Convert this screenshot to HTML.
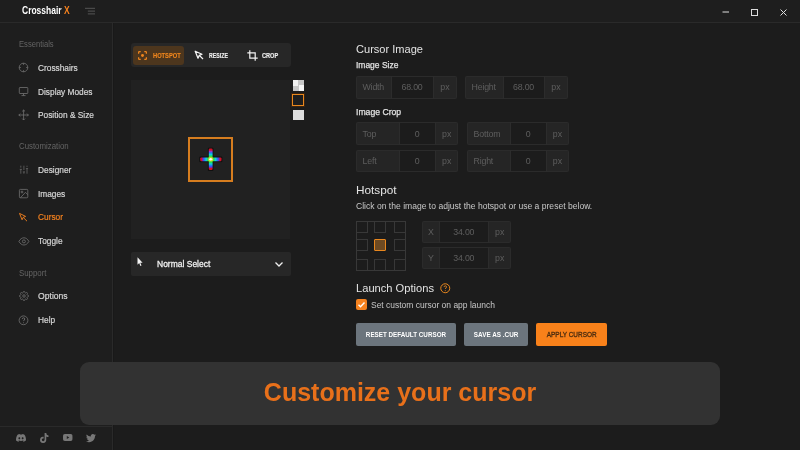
<!DOCTYPE html>
<html><head><meta charset="utf-8">
<style>
*{box-sizing:border-box;margin:0;padding:0}
html,body{width:800px;height:450px;overflow:hidden;background:#1c1c1c;font-family:"Liberation Sans",sans-serif;color:#ddd}
.abs{position:absolute}
svg{position:absolute;overflow:visible}
#titlebar{position:absolute;left:0;top:0;width:800px;height:22.6px;background:#1e1e1e;border-bottom:1px solid #2a2a2a}
#title{position:absolute;left:21.5px;top:5.4px;font-size:10.2px;transform-origin:0 50%;transform:scaleX(.833);font-weight:bold;color:#fff;white-space:nowrap}
#title span{color:#f5821f}
#sidebar{position:absolute;left:0;top:23px;width:113px;height:427px;background:#1e1e1e;border-right:1px solid #2a2a2a;box-shadow:1px 0 0 #191919}
.sec{position:absolute;left:18.7px;font-size:8.6px;transform-origin:0 50%;transform:scaleX(.885);color:#646464;white-space:nowrap}
.item{-webkit-text-stroke:.2px;position:absolute;left:37.8px;font-size:9.2px;transform-origin:0 50%;transform:scaleX(.905);color:#d6d6d6;white-space:nowrap}
.item.act{color:#f5821f}
#social{position:absolute;left:0;top:426px;width:112px;height:24px;border-top:1px solid #2a2a2a}
#toolbar{position:absolute;left:131px;top:43.3px;width:160px;height:24px;background:#272727;border-radius:3px}
#hot{position:absolute;left:2.2px;top:3px;width:50.8px;height:18.5px;background:#4d361d;border-radius:3px}
.tb{-webkit-text-stroke:.15px;position:absolute;top:8.9px;transform-origin:0 50%;font-size:6.8px;font-weight:bold;color:#ececec;white-space:nowrap}
#preview{position:absolute;left:131px;top:80px;width:159px;height:159px;background:#212121}
#sel{position:absolute;left:188px;top:137px;width:45px;height:45px;border:2px solid #d67d1f}
#dd{position:absolute;left:131px;top:252px;width:160px;height:24px;background:#272727;border-radius:2px}
.h1{position:absolute;left:356px;font-size:11.4px;transform-origin:0 50%;color:#e4e4e4;white-space:nowrap}
.h2{-webkit-text-stroke:.25px;position:absolute;left:355.8px;font-size:9.2px;transform-origin:0 50%;transform:scaleX(.93);color:#e2e2e2;white-space:nowrap}
.inp{position:absolute;height:22.5px;background:#252525;box-shadow:inset 0 0 0 1px #2b2b2b;border-radius:2px;overflow:hidden;font-size:8.8px;color:#5e5e5e}
.inp div{position:absolute;top:0;height:100%;line-height:22.5px;white-space:nowrap}
.inp .v{background:#1c1c1c;box-shadow:inset 0 1px 0 #2b2b2b,inset 0 -1px 0 #2b2b2b;text-align:center;border-left:1px solid #2c2c2c;border-right:1px solid #2c2c2c}
.inp .u{text-align:center}
.inp .l,.inp .v{letter-spacing:-.18px}
.btn span{display:inline-block}
.btn{position:absolute;top:323px;height:23px;border-radius:2px;font-size:6.9px;font-weight:bold;color:#fff;text-align:center;line-height:23px;white-space:nowrap}
#banner{position:absolute;left:80px;top:362px;width:640px;height:63px;background:#323232;border-radius:9px;text-align:center;line-height:60.6px;font-size:25px;font-weight:bold;color:#e8701a;white-space:nowrap}
.hs{position:absolute;width:12px;height:12px;border:1px solid #383838}
</style></head><body><div id="root" style="position:absolute;left:0;top:0;width:800px;height:450px;will-change:transform">
<div id="titlebar"><div id="title">Crosshair <span>X</span></div>
<svg style="left:85px;top:7px" width="11" height="8" viewBox="0 0 11 8"><path d="M0 1.3h10M2.8 4.1h7.2M2.8 6.9h7.2" stroke="#5c5c5c" stroke-width=".9" fill="none"/></svg>
<svg style="left:720px;top:5.5px" width="70" height="12" viewBox="0 0 70 12"><path d="M2.5 6h6.5" stroke="#ddd" stroke-width="1" fill="none"/><rect x="31.5" y="3.5" width="6" height="6" fill="none" stroke="#ddd" stroke-width="1"/><path d="M60.5 3.5l6 6M66.5 3.5l-6 6" stroke="#ddd" stroke-width="1" fill="none"/></svg>
</div>
<div id="sidebar"></div>
<div class="sec" style="top:39px">Essentials</div>
<div class="item" style="top:62.7px">Crosshairs</div>
<div class="item" style="top:86.7px">Display Modes</div>
<div class="item" style="top:110.1px">Position &amp; Size</div>
<div class="sec" style="top:141.2px;transform:scaleX(.912)">Customization</div>
<div class="item" style="top:164.9px">Designer</div>
<div class="item" style="top:188.9px">Images</div>
<div class="item act" style="top:212.3px">Cursor</div>
<div class="item" style="top:236.3px">Toggle</div>
<div class="sec" style="top:267.6px;transform:scaleX(.915)">Support</div>
<div class="item" style="top:291.4px;left:37.6px;transform:scaleX(.937)">Options</div>
<div class="item" style="top:314.8px">Help</div>

<!-- sidebar icons -->
<svg style="left:18px;top:62px" width="11" height="11" viewBox="0 0 11 11" fill="none" stroke="#727272" stroke-width="0.8"><circle cx="5.5" cy="5.5" r="4.3"/><path d="M5.5 1.2v1.6M5.5 8.2v1.6M1.2 5.5h1.6M8.2 5.5h1.6"/></svg>
<svg style="left:18px;top:86px" width="11" height="11" viewBox="0 0 11 11" fill="none" stroke="#727272" stroke-width="0.8"><rect x="1.3" y="1.5" width="8.5" height="6" rx="0.6"/><path d="M5.5 7.6v1.9M3.5 9.6h4"/></svg>
<svg style="left:18px;top:109px" width="11" height="12" viewBox="0 0 11 12" fill="none" stroke="#727272" stroke-width="0.8"><path d="M5.6 1v10M0.8 6h9.6M4.2 2.4L5.6 1 7 2.4M4.2 9.6L5.6 11 7 9.6M2.2 4.6L0.8 6l1.4 1.4M9 4.6L10.4 6 9 7.4"/></svg>
<svg style="left:18.6px;top:165.4px" width="10" height="9.6" viewBox="0 0 11 11" preserveAspectRatio="none" fill="none" stroke="#6a6a6a" stroke-width="0.85"><path d="M2 .8v2.2M2 5v5M5.4 .8v5M5.4 8v2M8.8 .8v1.4M8.8 4.2v5.8M.8 5h2.4M4.2 7.9h2.4M7.6 4.1h2.4"/></svg>
<svg style="left:18px;top:188px" width="11" height="11" viewBox="0 0 11 11" fill="none" stroke="#727272" stroke-width="0.8"><rect x="1.4" y="1.4" width="8.4" height="8.4" rx="1"/><circle cx="4" cy="4" r="0.9"/><path d="M9.8 6.6L7.4 4.4 2.4 9.8"/></svg>
<svg style="left:18px;top:212px" width="11" height="11" viewBox="0 0 11 11" fill="none" stroke="#f5821f" stroke-width="0.9" stroke-linejoin="round"><path d="M1.5 1.4l2.6 6.4 1-2.4 2.5-1zM5.4 5.6l3.6 3.6"/></svg>
<svg style="left:18px;top:236px" width="12" height="11" viewBox="0 0 12 11" fill="none" stroke="#727272" stroke-width="0.8"><path d="M0.9 5.4C2.2 3 4 1.8 5.9 1.8S9.6 3 10.9 5.4C9.6 7.8 7.8 9 5.9 9S2.2 7.8 0.9 5.4z"/><circle cx="5.9" cy="5.4" r="1.5"/></svg>
<svg style="left:18.9px;top:291.2px" width="10" height="10" viewBox="0 0 24 24" fill="none" stroke="#727272" stroke-width="1.9" stroke-linejoin="round"><circle cx="12" cy="12" r="3"/><path d="M19.4 15a1.65 1.65 0 0 0 .33 1.82l.06.06a2 2 0 1 1-2.83 2.83l-.06-.06a1.65 1.65 0 0 0-1.82-.33 1.65 1.65 0 0 0-1 1.51V21a2 2 0 0 1-4 0v-.09A1.65 1.65 0 0 0 9 19.4a1.65 1.65 0 0 0-1.82.33l-.06.06a2 2 0 1 1-2.83-2.83l.06-.06a1.65 1.65 0 0 0 .33-1.82 1.65 1.65 0 0 0-1.51-1H3a2 2 0 0 1 0-4h.09A1.65 1.65 0 0 0 4.6 9a1.65 1.65 0 0 0-.33-1.82l-.06-.06a2 2 0 1 1 2.83-2.83l.06.06a1.65 1.65 0 0 0 1.82.33H9a1.65 1.65 0 0 0 1-1.51V3a2 2 0 0 1 4 0v.09a1.65 1.65 0 0 0 1 1.51 1.65 1.65 0 0 0 1.82-.33l.06-.06a2 2 0 1 1 2.83 2.83l-.06.06a1.65 1.65 0 0 0-.33 1.82V9a1.65 1.65 0 0 0 1.51 1H21a2 2 0 0 1 0 4h-.09a1.65 1.65 0 0 0-1.51 1z"/></svg>
<svg style="left:18px;top:315px" width="11" height="11" viewBox="0 0 11 11" fill="none" stroke="#727272" stroke-width="0.8"><circle cx="5.5" cy="5.3" r="4.4"/><path d="M4.2 4.1c0-.8.6-1.3 1.3-1.3s1.3.5 1.3 1.2c0 1-1.3 1.1-1.3 2.1M5.5 7.4v.8" stroke-width="0.9"/></svg>

<div id="social"></div>
<!-- social icons -->
<svg style="left:16px;top:434px" width="10" height="7.5" viewBox="0 0 20 15" fill="#777"><path d="M16.9 1.3A16 16 0 0 0 12.9 0l-.5 1a15 15 0 0 0-4.7 0L7.2 0a16 16 0 0 0-4.1 1.3C.5 5.2-.2 9 .1 12.8a16 16 0 0 0 5 2.5l1.1-1.7-1.7-.8.4-.3a11.5 11.5 0 0 0 10.2 0l.4.3-1.7.8 1.1 1.7a16 16 0 0 0 5-2.5c.4-4.4-.7-8.2-3-11.5zM6.7 10.5c-1 0-1.8-.9-1.8-2s.8-2 1.8-2 1.8.9 1.8 2-.8 2-1.8 2zm6.6 0c-1 0-1.8-.9-1.8-2s.8-2 1.8-2 1.8.9 1.8 2-.8 2-1.8 2z"/></svg>
<svg style="left:39.5px;top:432.5px" width="9" height="10" viewBox="0 0 18 20" fill="#777"><path d="M12.5 0h-3.3v13.6a2.8 2.8 0 1 1-2.8-2.8c.3 0 .6 0 .9.1V7.5a6.2 6.2 0 1 0 5.2 6.1V6.8a7.8 7.8 0 0 0 4.5 1.4V4.9A4.7 4.7 0 0 1 12.5 0z"/></svg>
<svg style="left:62.5px;top:434px" width="9.5" height="7" viewBox="0 0 19 14" fill="#777"><path d="M18.6 2.2A2.4 2.4 0 0 0 16.9.5C15.4 0 9.5 0 9.5 0S3.6 0 2.1.5A2.4 2.4 0 0 0 .4 2.2C0 3.7 0 7 0 7s0 3.3.4 4.8a2.4 2.4 0 0 0 1.7 1.7c1.5.5 7.4.5 7.4.5s5.9 0 7.4-.5a2.4 2.4 0 0 0 1.7-1.7C19 10.3 19 7 19 7s0-3.3-.4-4.8zM7.6 10V4l5 3-5 3z"/></svg>
<svg style="left:85.5px;top:433.5px" width="10" height="8.5" viewBox="0 0 20 17" fill="#777"><path d="M20 2a8 8 0 0 1-2.4.7A4.1 4.1 0 0 0 19.4.4a8 8 0 0 1-2.6 1A4.1 4.1 0 0 0 9.7 5.1 11.6 11.6 0 0 1 1.3.8a4.1 4.1 0 0 0 1.3 5.5 4 4 0 0 1-1.9-.5 4.1 4.1 0 0 0 3.3 4.1 4 4 0 0 1-1.9.1 4.1 4.1 0 0 0 3.8 2.8A8.2 8.2 0 0 1 0 14.5 11.6 11.6 0 0 0 6.3 16.3c7.5 0 11.7-6.3 11.7-11.7v-.5A8.3 8.3 0 0 0 20 2z"/></svg>

<div id="toolbar"><div id="hot"></div>
<div class="tb" style="left:21.6px;color:#f0861d;transform:scaleX(.845)">HOTSPOT</div>
<div class="tb" style="left:77.9px;transform:scaleX(.77)">RESIZE</div>
<div class="tb" style="left:130.7px;transform:scaleX(.826)">CROP</div>
<svg style="left:7.3px;top:7.3px" width="9" height="9" viewBox="0 0 10 10" fill="none" stroke="#f0861d" stroke-width="1.35"><path d="M.7 3V1.5Q.7.7 1.5.7H3M7 .7h1.5q.8 0 .8.8V3M9.3 7v1.5q0 .8-.8.8H7M3 9.3H1.5q-.8 0-.8-.8V7"/><circle cx="5" cy="5" r="1.6" fill="#f0861d" stroke="none"/></svg>
<svg style="left:63px;top:7px" width="10" height="10" viewBox="0 0 10 10" fill="none" stroke="#f4f4f4" stroke-width="1.25" stroke-linejoin="round"><path d="M1.2 1.2l2.8 7 1.2-2.8 2.8-1.2zM5.6 5.6l3.4 3.4"/></svg>
<svg style="left:116px;top:6.5px" width="11" height="11" viewBox="0 0 11 11" fill="none" stroke="#f2f2f2" stroke-width="1.2"><path d="M2.8 .3v7.9h7.9M.3 2.8h7.9v7.9"/></svg>
</div>
<div id="preview"></div>
<div id="sel"></div>
<!-- crosshair -->
<svg style="left:198px;top:146px" width="26" height="26" viewBox="198 146 26 26">
<defs>
<linearGradient id="gh" x1="0" y1="0" x2="1" y2="0"><stop offset="0" stop-color="#d01020"/><stop offset=".07" stop-color="#d01030"/><stop offset=".13" stop-color="#6030e0"/><stop offset=".2" stop-color="#2080f0"/><stop offset=".28" stop-color="#10d0e0"/><stop offset=".36" stop-color="#20e050"/><stop offset=".43" stop-color="#c0e020"/><stop offset=".47" stop-color="#f0b040"/><stop offset=".5" stop-color="#ffffff"/><stop offset=".53" stop-color="#f0b040"/><stop offset=".57" stop-color="#c0e020"/><stop offset=".64" stop-color="#20e050"/><stop offset=".72" stop-color="#10d0e0"/><stop offset=".8" stop-color="#2080f0"/><stop offset=".87" stop-color="#6030e0"/><stop offset=".93" stop-color="#d01030"/><stop offset="1" stop-color="#d01020"/></linearGradient>
<linearGradient id="gv" x1="0" y1="0" x2="0" y2="1"><stop offset="0" stop-color="#d01020"/><stop offset=".07" stop-color="#d01030"/><stop offset=".13" stop-color="#a030d0"/><stop offset=".2" stop-color="#2080f0"/><stop offset=".28" stop-color="#10d0e0"/><stop offset=".36" stop-color="#20e050"/><stop offset=".43" stop-color="#c0e020"/><stop offset=".47" stop-color="#f0b040"/><stop offset=".5" stop-color="#ffffff"/><stop offset=".53" stop-color="#f0b040"/><stop offset=".57" stop-color="#c0e020"/><stop offset=".64" stop-color="#20e050"/><stop offset=".72" stop-color="#10d0e0"/><stop offset=".8" stop-color="#2080f0"/><stop offset=".87" stop-color="#6030e0"/><stop offset=".93" stop-color="#d01030"/><stop offset="1" stop-color="#d01020"/></linearGradient>
</defs>
<path d="M199.8 157h8.6v-8.8h4.6v8.8h8.9v4.6h-8.9v8.8h-4.6v-8.8h-8.6z" fill="#101010" stroke="#101010" stroke-width="1" stroke-linejoin="round"/>
<rect x="200.2" y="157.4" width="21.3" height="3.8" rx="1.2" fill="url(#gh)"/>
<rect x="208.8" y="148.6" width="3.8" height="21.3" rx="1.2" fill="url(#gv)"/>
<rect x="209.5" y="158.1" width="2.4" height="2.4" rx=".8" fill="#fff" opacity=".9"/>
</svg>

<div class="abs" style="left:293px;top:80px;width:10.5px;height:10.5px;background:conic-gradient(#c6c6c6 0 25%,#f4f4f4 0 50%,#c6c6c6 0 75%,#f0f0f0 0)"></div>
<div class="abs" style="left:292px;top:93.5px;width:12px;height:12.5px;border:1.2px solid #e8871e;background:#1e1e1e;box-shadow:0 0 0 1px #3a2410"></div>
<div class="abs" style="left:293px;top:109.5px;width:10.5px;height:10.5px;background:#dcdcdc"></div>

<div id="dd"><div class="abs" style="left:25.5px;top:6.6px;font-size:9.2px;color:#f0f0f0;-webkit-text-stroke:.3px;white-space:nowrap;transform-origin:0 50%;transform:scaleX(.924)">Normal Select</div>
<svg style="left:6px;top:4.5px" width="7" height="10" viewBox="0 0 7 10" fill="#f4f4f4"><path d="M.5.3v7.4l1.7-1.6 1.2 2.8 1.1-.5-1.2-2.7h2.3z"/></svg>
<svg style="left:144px;top:10px" width="8" height="5" viewBox="0 0 8 5" fill="none" stroke="#f0f0f0" stroke-width="1.3"><path d="M.5.5L4 4 7.5.5"/></svg>
</div>

<div class="h1" style="top:43px;transform:scaleX(.971)">Cursor Image</div>
<div class="h2" style="top:60.3px;transform:scaleX(.922)">Image Size</div>
<div class="inp" style="left:355.5px;top:76px;width:101px"><div class="l" style="left:7px">Width</div><div class="v" style="left:35px;width:43px">68.00</div><div class="u" style="left:78px;width:23px">px</div></div>
<div class="inp" style="left:464.5px;top:76px;width:103px"><div class="l" style="left:7px">Height</div><div class="v" style="left:38px;width:42px">68.00</div><div class="u" style="left:80px;width:23px">px</div></div>
<div class="h2" style="top:107.2px;transform:scaleX(.94)">Image Crop</div>
<div class="inp" style="left:355.5px;top:122.3px;width:102.5px"><div class="l" style="line-height:24.2px;left:7px">Top</div><div class="v" style="line-height:24.2px;left:43px;width:37px">0</div><div class="u" style="line-height:24.2px;left:80px;width:22.5px">px</div></div>
<div class="inp" style="left:466.5px;top:122.3px;width:102px"><div class="l" style="line-height:24.2px;left:7px">Bottom</div><div class="v" style="line-height:24.2px;left:43px;width:37px">0</div><div class="u" style="line-height:24.2px;left:80px;width:22px">px</div></div>
<div class="inp" style="left:355.5px;top:149.5px;width:102.5px"><div class="l" style="left:7px">Left</div><div class="v" style="left:43px;width:37px">0</div><div class="u" style="left:80px;width:22.5px">px</div></div>
<div class="inp" style="left:466.5px;top:149.5px;width:102px"><div class="l" style="left:7px">Right</div><div class="v" style="left:43px;width:37px">0</div><div class="u" style="left:80px;width:22px">px</div></div>

<div class="h1" style="top:184px;transform:scaleX(1.035)">Hotspot</div>
<div class="h2" style="top:200.8px;font-size:8.8px;color:#c8c8c8;-webkit-text-stroke:0;transform:scaleX(.974)">Click on the image to adjust the hotspot or use a preset below.</div>

<!-- hotspot grid -->
<div class="abs" style="left:356px;top:220.6px;width:50px;height:50px;border:1px solid #383838"></div>
<div class="hs" style="left:356px;top:220.6px"></div><div class="hs" style="left:374px;top:220.6px"></div><div class="hs" style="left:394px;top:220.6px"></div>
<div class="hs" style="left:356px;top:239.3px"></div><div class="hs" style="left:374px;top:239.3px;border:1.5px solid #e8871e;background:#6e4a22;border-radius:1px"></div><div class="hs" style="left:394px;top:239.3px"></div>
<div class="hs" style="left:356px;top:258.6px"></div><div class="hs" style="left:374px;top:258.6px"></div><div class="hs" style="left:394px;top:258.6px"></div>

<div class="inp" style="left:422px;top:221px;width:89px;height:21.5px"><div class="l" style="left:6px;line-height:22.3px">X</div><div class="v" style="left:16.5px;width:50.5px;line-height:22.3px">34.00</div><div class="u" style="left:67px;width:21.5px;line-height:22.3px">px</div></div>
<div class="inp" style="left:422px;top:247px;width:89px;height:22px"><div class="l" style="left:6px;line-height:22px">Y</div><div class="v" style="left:16.5px;width:50.5px;line-height:22px">34.00</div><div class="u" style="left:67px;width:21.5px;line-height:22px">px</div></div>

<div class="h1" style="top:282.4px;transform:scaleX(.977)">Launch Options</div>
<svg style="left:440px;top:283.2px" width="10.5" height="10.5" viewBox="0 0 10.5 10.5" fill="none" stroke="#e8871e" stroke-width="1"><circle cx="5.25" cy="5.25" r="4.5"/><path d="M4 4.1c0-.8.6-1.3 1.3-1.3s1.3.5 1.3 1.2c0 .9-1.3 1-1.3 2M5.3 7.2v.9" stroke-width="0.9"/></svg>
<div class="abs" style="left:356px;top:299.2px;width:11px;height:11px;background:#f5821f;border-radius:2px"></div>
<svg style="left:356px;top:299.2px" width="11" height="11" viewBox="0 0 11 11" fill="none" stroke="#fff" stroke-width="1.4"><path d="M2.5 5.7l2 2L8.5 3.4"/></svg>
<div class="h2" style="top:299.8px;left:371.2px;font-size:8.8px;color:#c8c8c8;-webkit-text-stroke:0;transform:scaleX(.963)">Set custom cursor on app launch</div>

<div class="btn" style="left:356px;width:100px;background:#6c757d"><span style="transform:scaleX(.912)">RESET DEFAULT CURSOR</span></div>
<div class="btn" style="left:464px;width:64px;background:#6c757d"><span style="transform:scaleX(.923)">SAVE AS .CUR</span></div>
<div class="btn" style="left:536px;width:70.5px;background:#f8811a;color:#4a2c10;font-weight:normal;-webkit-text-stroke:.3px"><span style="transform:scaleX(.934)">APPLY CURSOR</span></div>

<div id="banner">Customize your cursor</div>
</div></body></html>
